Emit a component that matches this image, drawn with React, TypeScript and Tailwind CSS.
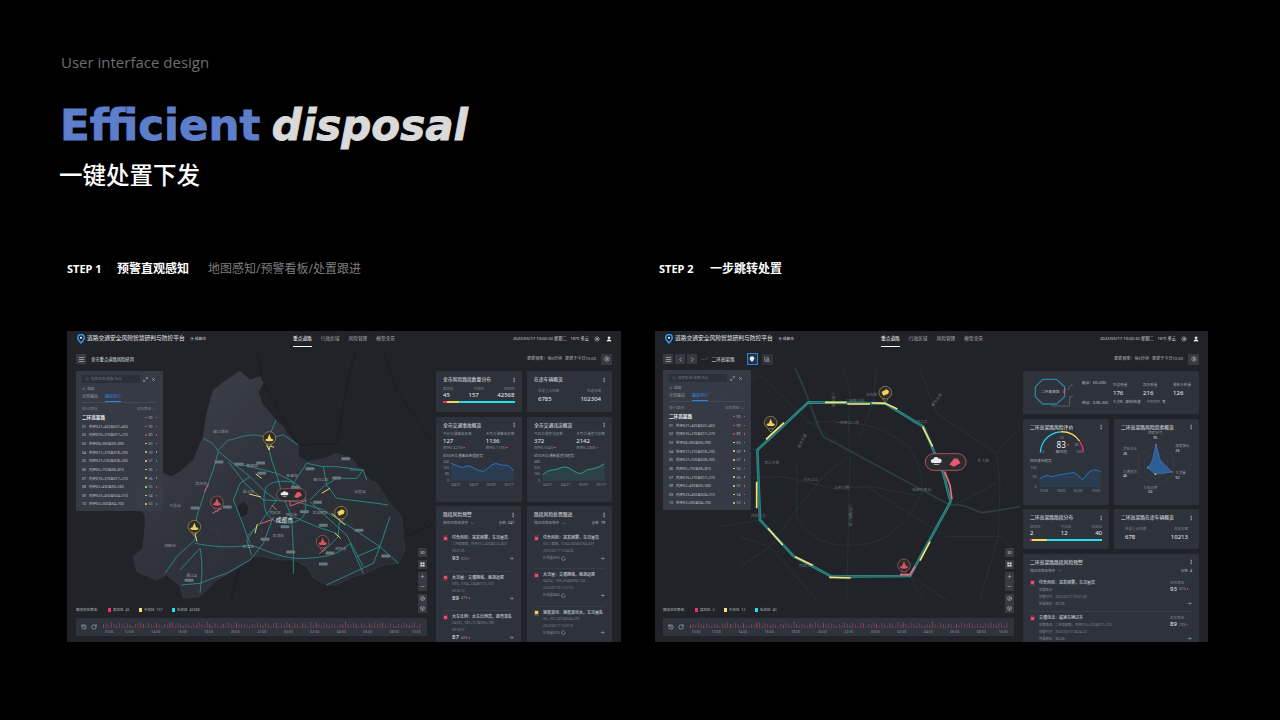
import { ArrowRight, ChevronDown, ChevronLeft, ChevronRight, ChartColumn, Compass, EllipsisVertical, Box, History, LayoutGrid, LoaderCircle, Maximize2, Menu, Minus, Plus, RotateCw, Search, Settings, Sun, User, X, MapPin, ArrowLeft } from 'lucide-react'
import type { ReactNode } from 'react'

const rows = [
  ['01', '外环K21+420至K22+450', '93', 'r'],
  ['02', '内环K16+270至K17+270', '89', 'r'],
  ['03', '外环K8+960至K9+990', '63', 'y'],
  ['04', '外环K17+270至K18+290', '59', 'y'],
  ['05', '内环K27+530至K28+300', '57', 'y'],
  ['06', '内环K5+750至K6+810', '56', 'y'],
  ['07', '内环K16+270至K17+270', '56', 'y'],
  ['08', '内环K2+430至K3+560', '55', 'y'],
  ['09', '内环K23+450至K24+510', '54', 'y'],
  ['10', '外环K3+560至K4+700', '53', 'y'],
]
const trend = ['#e0426a', '#e0426a', '#8a8f98', '#8a8f98', '#22a67a', '#22a67a', '#8a8f98', '#e0426a', '#22a67a', '#22a67a']
const times = ['10:00', '12:00', '14:00', '16:00', '18:00', '20:00', '22:00', '00:00', '02:00', '04:00', '06:00', '08:00', '10:00']

// smooth line through the points, coordinates are the zoomed ones of the picture
const smooth = (p: number[][]) => {
  let d = `M${p[0][0]},${p[0][1]}`
  for (let i = 1; i < p.length - 1; i++) {
    d += ` Q${p[i][0]},${p[i][1]} ${(p[i][0] + p[i + 1][0]) / 2},${(p[i][1] + p[i + 1][1]) / 2}`
  }
  const l = p[p.length - 1]
  return d + ` L${l[0]},${l[1]}`
}

const Logo = () => (
  <svg width="8" height="10" viewBox="0 0 16 20" fill="none">
    <path d="M8 18 C3 13 1.5 10.5 1.5 7.5 A6.5 6.5 0 1 1 14.5 7.5 C14.5 10.5 13 13 8 18Z" stroke="#2f9bf0" strokeWidth="3" />
    <circle cx="8" cy="7.5" r="2.2" fill="#fff" />
  </svg>
)

const Header = () => (
  <div className="flex h-[20px] items-start pl-[10px] pr-[9px]">
    <div className="flex h-[16px] w-[216px] items-center">
      <Logo />
      <span className="ml-[2px] text-[5.75px] leading-none text-[#e8eaee]">道路交通安全风险智慧研判与防控平台</span>
      <MapPin size={4} className="ml-[5px] text-[#c8ccd2]" />
      <span className="ml-[1px] text-[3.8px] leading-none text-[#c8ccd2]">成都市</span>
    </div>
    <div className="flex gap-[9px] text-[4.7px] text-[#a9adb5]">
      <span className="flex h-[16px] items-center border-b border-white text-white">重点道路</span>
      <span className="flex h-[16px] items-center">行政区域</span>
      <span className="flex h-[16px] items-center">风险管理</span>
      <span className="flex h-[16px] items-center">模型全景</span>
    </div>
    <div className="ml-auto flex h-[16px] items-center text-[4.2px] text-[#d4d7dc]">
      <span>2022/05/17 10:02:32 星期二</span>
      <span className="ml-[4px]">16℃ 多云</span>
      <Sun size={6} className="ml-[5px] text-white" />
      <User size={6} fill="#fff" className="ml-[6px] text-white" />
    </div>
  </div>
)

const Btn = ({ children, active }: { children: ReactNode; active?: boolean }) => (
  <span className={active ? 'flex h-[12px] w-[11px] items-center justify-center border border-[#2f7fd0] bg-[#24344a] text-white' : 'flex h-[10px] w-[10px] items-center justify-center bg-[#363a43] text-[#d4d7dc]'}>
    {children}
  </span>
)

const UpdateInfo = () => (
  <div className="ml-auto flex items-center text-[4.1px] text-[#b4b8bf]">
    <span>更新频率：每5分钟</span>
    <span className="ml-[3px]">更新于今日10:00</span>
    <span className="ml-[5px] flex h-[11px] w-[11px] items-center justify-center bg-[#363a43]">
      <Settings size={6} className="text-[#c8ccd2]" />
    </span>
  </div>
)

const SidePanel = ({ w }: { w: string }) => (
  <div className={`${w} h-[140px] shrink-0 rounded-[1px] bg-[#383c46]/95 px-[6px] pt-[4px]`}>
    <div className="flex items-center">
      <div className="flex h-[8px] w-[58px] items-center bg-[#2b2f37] pl-[3px] text-[3.5px] text-[#6f747d]">
        <Search size={4} />
        <span className="ml-[2px]">搜索区域/道路/地点</span>
      </div>
      <Maximize2 size={5} className="ml-[3px] text-[#c8ccd2]" />
      <X size={5} className="ml-[3px] text-[#dfe1e5]" />
    </div>
    <div className="mt-[3px] flex items-center text-[3.5px] leading-[5px] text-[#a2a6ae]">
      <ArrowLeft size={4} />
      <span className="ml-[1px]">返回</span>
    </div>
    <div className="mt-[3px] flex gap-[7px] border-b border-[#444852] text-[4px] text-[#8d929b]">
      <span className="pb-[1px]">全部路段</span>
      <span className="border-b border-[#2f86e0] pb-[1px] text-[#2f86e0]">路段排行</span>
    </div>
    <div className="mt-[3px] flex items-center justify-between text-[3.5px] leading-[6px] text-[#7e838c]">
      <span>排行/路段</span>
      <span className="flex items-center">风险等级<ChevronDown size={5} className="ml-[1px]" /></span>
    </div>
    <div className="mt-[1px] flex h-[9px] items-center">
      <span className="text-[4.6px] font-bold text-[#e8eaee]">二环高架路</span>
      <span className="ml-auto h-[1.5px] w-[1.5px] rounded-full bg-[#e0426a]" />
      <span className="ml-[2px] w-[6px] text-[3.5px] text-[#b4b8bf]">93</span>
      <span className="ml-[1px] h-[1.5px] w-[1.5px] bg-[#e0426a]" />
    </div>
    {rows.map((r, i) => (
      <div key={r[0]} className="flex h-[8.65px] items-center text-[3.5px] text-[#c2c5cb]">
        <span className="w-[7px]">{r[0]}</span>
        <span>{r[1]}</span>
        <span className={r[3] === 'r' ? 'ml-auto h-[1.5px] w-[1.5px] rounded-full bg-[#e0426a]' : 'ml-auto h-[1.5px] w-[1.5px] rounded-full bg-[#f3d765]'} />
        <span className="ml-[2px] w-[6px] text-[#b4b8bf]">{r[2]}</span>
        <span className="ml-[1px] h-[1.5px] w-[1.5px]" style={{ background: trend[i] }} />
      </div>
    ))}
  </div>
)

const MapTools = () => (
  <div className="flex w-[9px] flex-col gap-[3px] text-[#d4d7dc]">
    <span className="flex h-[9px] items-center justify-center bg-[#363a43] text-[3.6px]">3D</span>
    <span className="flex h-[9px] items-center justify-center bg-[#363a43]"><LayoutGrid size={5} fill="#d4d7dc" /></span>
    <div className="flex flex-col bg-[#363a43]">
      <span className="flex h-[9.5px] items-center justify-center"><Plus size={5} /></span>
      <span className="flex h-[9.5px] items-center justify-center"><Minus size={5} /></span>
    </div>
    <div className="flex flex-col bg-[#363a43]">
      <span className="flex h-[9.5px] items-center justify-center"><Compass size={5} /></span>
      <span className="flex h-[9.5px] items-center justify-center"><Box size={5} /></span>
    </div>
  </div>
)

const Legend = ({ h, m, l }: { h: string; m: string; l: string }) => (
  <div className="flex items-center text-[3.5px] leading-[6px] text-[#b4b8bf]">
    <span className="mr-[7px]">路段风险等级：</span>
    <span className="h-[3.5px] w-[3.5px] bg-[#ef2f66]" />
    <span className="ml-[2px]">高风险</span>
    <span className="ml-[2px] mr-[9px]">{h}</span>
    <span className="h-[3.5px] w-[3.5px] bg-[#f8e071]" />
    <span className="ml-[2px]">中风险</span>
    <span className="ml-[2px] mr-[9px]">{m}</span>
    <span className="h-[3.5px] w-[3.5px] bg-[#22e0e8]" />
    <span className="ml-[2px]">低风险</span>
    <span className="ml-[2px]">{l}</span>
  </div>
)

const Timeline = () => (
  <div className="mt-[5px] flex h-[18px] items-center rounded-[1px] bg-[#2f333c] pl-[5px]">
    <History size={6} className="text-[#c8ccd2]" />
    <RotateCw size={6} className="ml-[4px] text-[#c8ccd2]" />
    <div className="ml-[6px] flex flex-col">
      <svg width="320" height="7" viewBox="0 0 320 7">
        {Array.from({ length: 120 }).map((_, i) => {
          const h = 2 + ((i * 7) % 11) * 0.35 + (i % 13 === 0 ? 1.5 : 0)
          return <rect key={i} x={i * 2.66} y={7 - h} width="0.8" height={h} fill={i % 5 === 0 ? '#b04a64' : '#854357'} />
        })}
      </svg>
      <div className="-ml-[1px] mt-[1px] flex text-center text-[3.5px] leading-[5px] text-[#8d929b]">
        {times.map((t, i) => (
          <span key={i} className={i === 0 ? 'w-[14px]' : i === 12 ? 'w-[17.5px]' : 'w-[26.5px]'}>{t}</span>
        ))}
      </div>
    </div>
  </div>
)

const Card = ({ title, className, children }: { title: string; className: string; children?: ReactNode }) => (
  <div className={`${className} shrink-0 overflow-hidden rounded-[1px] bg-[#2e323b] px-[7px] pt-[5px]`}>
    <div className="flex items-center justify-between">
      <span className="text-[4.8px] leading-[7px] text-[#e3e5e9]">{title}</span>
      <EllipsisVertical size={6} className="-mr-[2px] text-[#c8ccd2]" />
    </div>
    {children}
  </div>
)

const RiskBar = ({ h, m, l, bar }: { h: string; m: string; l: string; bar: string[] }) => (
  <>
    <div className="mt-[3px] flex justify-between text-[3.5px] leading-[5px] text-[#7e838c]">
      <span>高风险</span><span>中风险</span><span>低风险</span>
    </div>
    <div className="flex justify-between text-[6px] leading-[9px] text-[#eceef1]">
      <span>{h}</span><span>{m}</span><span>{l}</span>
    </div>
    <div className="mt-[1px] flex h-[2px]">
      <span className={`${bar[0]} bg-[#ef2f66]`} />
      <span className={`${bar[1]} bg-[#f8d95f]`} />
      <span className="flex-1 bg-[#22dfe6]" />
    </div>
  </>
)

const Vehicles = ({ a, b }: { a: string; b: string }) => (
  <div className="mt-[5px] flex justify-between px-[4px]">
    <div>
      <div className="text-[3.5px] leading-[6px] text-[#7e838c]">在途重点车辆</div>
      <div className="text-[6px] leading-[10px] text-[#eceef1]">{a}</div>
    </div>
    <div className="text-right">
      <div className="text-[3.5px] leading-[6px] text-[#7e838c]">在途车辆</div>
      <div className="text-[6px] leading-[10px] text-[#eceef1]">{b}</div>
    </div>
  </div>
)

const Stat = ({ label, value, sub, pct }: { label: string; value: string; sub: string; pct: string }) => (
  <div>
    <div className="text-[3.6px] leading-[6px] text-[#8d929b]">{label}</div>
    <div className="text-[6px] leading-[9px] text-[#eceef1]">{value}</div>
    <div className="flex items-center text-[3.2px] leading-[4px] text-[#8d929b]">
      {sub} {pct}
      <span className="ml-[1px] h-[1.5px] w-[1.5px] bg-[#ef2f66]" />
    </div>
  </div>
)

type ChartProps = {
  box: string
  w: number
  h: number
  pts: number[][]
  color: string
  base: number
  yl: [string, number][]
  xl: [string, number][]
  yAt: number
  xAt: number
  x1: number
}
const Chart = ({ box, w, h, pts, color, base, yl, xl, yAt, xAt, x1 }: ChartProps) => {
  const line = smooth(pts)
  return (
    <svg width={w} height={h} viewBox={box} className="block">
      {yl.map(([t, y]) => (
        <g key={t}>
          <line x1={yAt + 4} x2={x1} y1={y} y2={y} stroke="#3d414b" strokeWidth="1" />
          <text x={yAt} y={y + 4} textAnchor="end" fontSize="11" fill="#8d929b">{t}</text>
        </g>
      ))}
      {xl.map(([t, x], i) => (
        <text key={i} x={x} y={xAt} textAnchor="middle" fontSize="10.5" fill="#8d929b">{t}</text>
      ))}
      <path d={`${line} L${pts[pts.length - 1][0]},${base} L${pts[0][0]},${base}Z`} fill={color} fillOpacity="0.16" />
      <path d={line} fill="none" stroke={color} strokeWidth="3" />
    </svg>
  )
}

const Delta = ({ v }: { v: string }) => (
  <span className="flex items-center text-[3.6px] text-[#8d929b]">
    {v}
    <span className="ml-[1px] h-[1.5px] w-[1.5px] bg-[#ef2f66]" />
  </span>
)

const WarnIcon = ({ y }: { y?: boolean }) => (
  <span className={y ? 'flex h-[6px] w-[5px] items-center justify-center rounded-[1px] bg-[#5a5040]' : 'flex h-[6px] w-[5px] items-center justify-center rounded-[1px] bg-[#5a3444]'}>
    <span className={y ? 'h-[3px] w-[2.5px] bg-[#f3cf6a]' : 'h-[3px] w-[2.5px] bg-[#ef4a70]'} />
  </span>
)

const SortRow = ({ total }: { total: string }) => (
  <div className="mt-[2px] flex items-center justify-between text-[3.6px] leading-[6px] text-[#9a9ea6]">
    <span className="flex items-center">按风险等级排序<ChevronDown size={5} className="ml-[2px]" /></span>
    <span>总数<span className="ml-[2px] text-[#d4d7dc]">{total}</span></span>
  </div>
)

const warnItems = [
  ['综合风险：突发团雾，车流量高', '二环高架路，外环K21+420至K22+450', '09:37:26', '93', '65%'],
  ['大流量：交通拥堵，瓶颈远尾', 'G93，K164+234至K172+307', '09:26:12', '89', '47%'],
  ['大车比例：大车比例高，跑弯混乱', 'G4202，K87+127至K90+789', '09:18:37', '87', '43%'],
]
const trackItems = [
  ['综合风险：突发团雾，车流量高', 'G32-1路路，K164+000至K164+307', '2022/05/17 12:34:26', '已处置65%', 'r'],
  ['大流量：交通拥堵，瓶颈远尾', 'G4202，K93+234至K96+124', '2022/05/16 11:57:12', '已处置84%', 'r'],
  ['速度波动：速度波动大，车流量乱', 'G5，K37+875至K64+256', '2022/05/17 12:37:16', '已处置62%', 'y'],
]

const WarnCard = () => (
  <Card title="路段风险预警" className="h-[140px] w-[85px]">
    <SortRow total="247" />
    <div className="mt-[6px]">
      {warnItems.map((it, i) => (
        <div key={i} className="h-[39.7px] border-b border-[#383c46] pt-[3px]">
          <div className="flex items-center text-[4px] leading-[6px] text-[#dfe1e5]">
            <WarnIcon />
            <span className="ml-[4px] whitespace-nowrap">{it[0]}</span>
          </div>
          <div className="ml-[9px] whitespace-nowrap text-[3.2px] leading-[7px] text-[#7e838c]">{it[1]}</div>
          <div className="ml-[9px] text-[3.2px] leading-[6px] text-[#7e838c]">{it[2]}</div>
          <div className="ml-[9px] flex items-center">
            <span className="text-[6px] leading-[9px] text-[#eceef1]">{it[3]}</span>
            <span className="ml-[2px]"><Delta v={it[4]} /></span>
            <ArrowRight size={5} className="ml-auto text-[#c8ccd2]" />
          </div>
        </div>
      ))}
    </div>
  </Card>
)

const TrackCard = () => (
  <Card title="路段风险处置跟进" className="h-[140px] w-[85px]">
    <SortRow total="79" />
    <div className="mt-[6px]">
      {trackItems.map((it, i) => (
        <div key={i} className="h-[37.3px] border-b border-[#383c46] pt-[3px]">
          <div className="flex items-center text-[4px] leading-[6px] text-[#dfe1e5]">
            <WarnIcon y={it[4] === 'y'} />
            <span className="ml-[4px] whitespace-nowrap">{it[0]}</span>
          </div>
          <div className="ml-[9px] whitespace-nowrap text-[3.2px] leading-[7px] text-[#7e838c]">{it[1]}</div>
          <div className="ml-[9px] text-[3.2px] leading-[6px] text-[#7e838c]">{it[2]}</div>
          <div className="ml-[9px] flex items-center text-[3.4px] leading-[8px] text-[#8d929b]">
            {it[3]}
            <LoaderCircle size={5} className="ml-[1px] text-[#d4d7dc]" />
            <ArrowRight size={5} className="ml-auto text-[#c8ccd2]" />
          </div>
        </div>
      ))}
    </div>
  </Card>
)

const LeftColumn = () => (
  <div className="flex h-[271px] w-[176px] flex-col gap-[4.5px] overflow-hidden">
    <div className="flex justify-between">
      <Card title="全市风险路段数量分布" className="h-[41px] w-[85.5px]">
        <RiskBar h="45" m="157" l="42568" bar={['w-[4px]', 'w-[12px]']} />
      </Card>
      <Card title="在途车辆概览" className="h-[41px] w-[85px]">
        <Vehicles a="6785" b="102304" />
      </Card>
    </div>
    <div className="flex justify-between">
      <Card title="全市交通事故概览" className="h-[85px] w-[85.5px]">
        <div className="mt-[2px] flex justify-between">
          <Stat label="今日交通事故总数" value="127" sub="同环比" pct="4.27%" />
          <Stat label="本月交通事故总数" value="1136" sub="同环比" pct="1.16%" />
        </div>
        <div className="mt-[3px] text-[3.6px] leading-[6px] text-[#a9adb5]">近30天交通事故数据趋势</div>
        <Chart
          box="42 430 220 88" w={73} h={29}
          pts={[[65, 443], [80, 448], [100, 458], [120, 447], [140, 462], [165, 470], [180, 455], [200, 441], [220, 450], [240, 448], [255, 465]]}
          color="#1f78c8" base={495} yAt={60} xAt={512} x1={258}
          yl={[['240', 438], ['160', 457], ['80', 476], ['0', 495]]}
          xl={[['04/27', 80], ['04/27', 135], ['05/07', 188], ['05/17', 242]]}
        />
      </Card>
      <Card title="全市交通违法概览" className="h-[85px] w-[85px]">
        <div className="mt-[2px] flex justify-between">
          <Stat label="今日交通违法总数" value="372" sub="同环比" pct="6.04%" />
          <Stat label="本月交通违法总数" value="2142" sub="同环比" pct="2.86%" />
        </div>
        <div className="mt-[3px] text-[3.6px] leading-[6px] text-[#a9adb5]">近30天交通数据违法趋势</div>
        <Chart
          box="312 430 220 88" w={73} h={29}
          pts={[[338, 477], [355, 463], [380, 463], [405, 450], [430, 465], [452, 478], [470, 462], [495, 460], [525, 445]]}
          color="#2a9d8f" base={495} yAt={330} xAt={512} x1={528}
          yl={[['480', 438], ['320', 457], ['160', 476], ['0', 495]]}
          xl={[['04/27', 352], ['04/27', 407], ['05/07', 462], ['05/17', 515]]}
        />
      </Card>
    </div>
    <div className="flex justify-between">
      <WarnCard />
      <TrackCard />
    </div>
  </div>
)

const Gauge = () => (
  <svg width="71" height="27" viewBox="70 325 190 72" className="mx-auto block">
    <path d="M95,382 A58,58 0 0 1 150,327" fill="none" stroke="#22dfe6" strokeWidth="3.5" />
    <path d="M150,327 A58,58 0 0 1 200,352" fill="none" stroke="#f8d95f" strokeWidth="3.5" />
    <path d="M200,352 A58,58 0 0 1 210,382" fill="none" stroke="#ef2f66" strokeWidth="3.5" />
    <text x="152" y="346" fontSize="9" textAnchor="middle" fill="#8d929b">50</text>
    <text x="103" y="385" fontSize="9" textAnchor="middle" fill="#8d929b">0</text>
    <text x="192" y="366" fontSize="9" textAnchor="middle" fill="#8d929b">80</text>
    <text x="198" y="384" fontSize="9" textAnchor="middle" fill="#8d929b">100</text>
    <text x="151" y="370" fontSize="22" textAnchor="middle" fill="#f2f3f5">83</text>
    <circle cx="169" cy="362" r="2.5" fill="#ef2f66" />
    <text x="151" y="384" fontSize="10.5" textAnchor="middle" fill="#a9adb5">高风险</text>
  </svg>
)

const hex = (r: number) => [[0, -1], [0.866, -0.5], [0.866, 0.5], [0, 1], [-0.866, 0.5], [-0.866, -0.5]].map(([x, y]) => `${422 + x * r},${430 + y * r}`).join(' ')

const radarLabels: [string, string, number, number, string][] = [
  ['团雾天气', '95', 420, 337, 'middle'],
  ['速度波动', '26', 480, 375, 'start'],
  ['大流量', '92', 480, 457, 'start'],
  ['大车比例', '50', 405, 500, 'middle'],
  ['交通违法', '46', 323, 452, 'start'],
  ['货车占比', '26', 323, 385, 'start'],
]

const Radar = () => (
  <svg width="85" height="66" viewBox="296 327 255 198" className="-mx-[7px] block">
    {[20, 40, 60].map((r) => <polygon key={r} points={hex(r)} fill="none" stroke="#4a4e58" strokeWidth="1" />)}
    <polygon points="422,368 435,415 470,450 420,457 397,437 410,420" fill="#2d74c2" fillOpacity="0.65" stroke="#3d8fe0" strokeWidth="1.5" />
    <circle cx="422" cy="368" r="2.5" fill="#ef4a70" />
    <circle cx="470" cy="450" r="2.5" fill="#ef4a70" />
    <circle cx="420" cy="457" r="2.5" fill="#f8d95f" />
    <circle cx="397" cy="437" r="2.5" fill="#4aa3f0" />
    {radarLabels.map(([t, v, x, y, a]) => (
      <g key={t}>
        <text x={x} y={y} fontSize="10.5" fill="#8d929b" textAnchor={a as 'start'}>{t}</text>
        <text x={x} y={y + 14} fontSize="11" fill="#dfe1e5" textAnchor={a as 'start'}>{v}</text>
      </g>
    ))}
  </svg>
)

const RoadCard = () => (
  <div className="flex h-[43px] shrink-0 items-center rounded-[1px] bg-[#2e323b]">
    <svg width="60" height="43" viewBox="25 138 180 129" className="shrink-0">
      <polygon points="84,163 125,163 150,185 150,215 125,237 84,237 62,215 62,185" fill="none" stroke="#2f7f9e" strokeWidth="4" />
      <path d="M150,190 L148,205" stroke="#ef4a70" strokeWidth="4" />
      <path d="M112,238 L112,243 L165,243 L165,215 L175,215 M160,195 L166,181 L175,181" fill="none" stroke="#7d828b" strokeWidth="1.5" />
      <text x="107" y="205" fontSize="11" textAnchor="middle" fill="#b4b8bf">二环高架路</text>
    </svg>
    <div className="-ml-[1px] flex h-[25px] w-[28px] flex-col justify-between text-[3.7px] leading-[5px] text-[#c2c5cb]">
      <span>起点：K0+000</span>
      <span>终点：K28+300</span>
    </div>
    <div className="ml-[3px] flex w-[78px] flex-col">
      <div className="flex justify-between">
        <div><div className="text-[3.6px] leading-[6px] text-[#8d929b]">匝道数量</div><div className="text-[6px] leading-[10px] text-[#eceef1]">176</div></div>
        <div><div className="text-[3.6px] leading-[6px] text-[#8d929b]">路段数量</div><div className="text-[6px] leading-[10px] text-[#eceef1]">216</div></div>
        <div><div className="text-[3.6px] leading-[6px] text-[#8d929b]">摄像头数量</div><div className="text-[6px] leading-[10px] text-[#eceef1]">126</div></div>
      </div>
      <div className="mt-[1px] flex text-[3.4px] leading-[5px] text-[#8d929b]">
        <span>车道数</span><span className="ml-[2px] text-[#c2c5cb]">双向3车道</span>
        <span className="ml-[6px]">中央护栏</span><span className="ml-[2px] text-[#c2c5cb]">有</span>
      </div>
    </div>
  </div>
)

const alertItems = [
  ['综合风险：突发团雾，车流量高', '预警路段', '', '2022/05/17 09:37:58', '成华区', '93', '65%'],
  ['交通违法：超速车辆过多', '预警路段', '二环高架路，内环K16+370至K17+270', '2022/05/17 08:24:23', '锦江区', '89', '23%'],
]

const RightColumn = () => (
  <div className="flex h-[271px] w-[176px] flex-col gap-[4.5px] overflow-hidden">
    <RoadCard />
    <div className="flex justify-between">
      <Card title="二环高架路风险评价" className="h-[86px] w-[86px]">
        <Gauge />
        <div className="text-[3.6px] leading-[6px] text-[#a9adb5]">风险变化趋势</div>
        <Chart
          box="42 430 225 88" w={73} h={29}
          pts={[[72, 475], [90, 462], [110, 470], [130, 462], [155, 460], [175, 454], [190, 462], [205, 482], [220, 455], [240, 445], [260, 453]]}
          color="#1f78c8" base={500} yAt={62} xAt={516} x1={262}
          yl={[['100', 440], ['50', 470], ['0', 500]]}
          xl={[['10:00', 85], ['18:00', 138], ['02:00', 190], ['10:00', 245]]}
        />
      </Card>
      <Card title="二环高架路风险因素概览" className="h-[86px] w-[85px]">
        <Radar />
      </Card>
    </div>
    <div className="flex justify-between">
      <Card title="二环高架路路段分布" className="h-[40px] w-[86px]">
        <RiskBar h="2" m="12" l="40" bar={['w-[1.5px]', 'w-[15px]']} />
      </Card>
      <Card title="二环高架路在途车辆概览" className="h-[40px] w-[85px]">
        <Vehicles a="678" b="10213" />
      </Card>
    </div>
    <Card title="二环高架路路段风险预警" className="h-[90px] w-[176px]">
      <SortRow total="4" />
      <div className="mt-[3px]">
        {alertItems.map((it, i) => (
          <div key={i} className="flex h-[35.5px] border-b border-[#383c46] pt-[3px]">
            <div className="flex-1">
              <div className="flex items-center text-[4px] leading-[6px] text-[#dfe1e5]">
                <WarnIcon />
                <span className="ml-[4px]">{it[0]}</span>
              </div>
              <div className="ml-[9px] flex text-[3.3px] leading-[7px] text-[#7e838c]"><span>{it[1]}</span><span className="ml-[3px]">{it[2]}</span></div>
              <div className="ml-[9px] flex text-[3.3px] leading-[7px] text-[#7e838c]"><span>预警时间</span><span className="ml-[3px]">{it[3]}</span></div>
              <div className="ml-[9px] flex text-[3.3px] leading-[7px] text-[#7e838c]"><span>所属辖区</span><span className="ml-[3px]">{it[4]}</span></div>
            </div>
            <div className="flex w-[22px] flex-col items-start">
              <span className="text-[3.5px] leading-[5px] text-[#7e838c]">风险等级</span>
              <span className="flex items-center"><span className="mr-[2px] text-[6px] leading-[9px] text-[#eceef1]">{it[5]}</span><Delta v={it[6]} /></span>
              <ArrowRight size={5} className="ml-auto mt-[7px] text-[#c8ccd2]" />
            </div>
          </div>
        ))}
      </div>
    </Card>
  </div>
)

// map marker, drawn in the zoomed coordinates of the map
const Pin = ({ x, y, kind }: { x: number; y: number; kind: 'cone' | 'redcone' | 'box' }) => {
  const ring = kind === 'redcone' ? '#a8646e' : '#a8995a'
  const fg = kind === 'redcone' ? '#dc5666' : '#f2d35e'
  return (
    <g>
      <path d={`M${x - 9},${y + 17} L${x},${y + 29} L${x + 9},${y + 17}`} fill="none" stroke={ring} strokeWidth="2" />
      <circle cx={x} cy={y} r="19" fill="#2e2d2b" stroke={ring} strokeWidth="2" />
      {kind === 'box' ? (
        <path d={`M${x - 11},${y - 2} L${x + 3},${y - 10} L${x + 11},${y - 5} L${x + 9},${y + 3} L${x - 6},${y + 9}Z`} fill={fg} />
      ) : (
        <>
          <path d={`M${x},${y - 12} L${x + 6},${y + 3} L${x - 6},${y + 3}Z`} fill={fg} />
          <ellipse cx={x} cy={y + 6} rx="12" ry="4" fill={fg} />
        </>
      )}
    </g>
  )
}

const Bubble = ({ x, y, s }: { x: number; y: number; s: number }) => (
  <g transform={`translate(${x} ${y}) scale(${s})`}>
    <rect x="0" y="0" width="88" height="36" rx="18" fill="#2c2c2e" stroke="#d8606f" strokeWidth="1.6" />
    <path d="M15,20 a4,4 0 0 1 2,-8 a6.5,6.5 0 0 1 12,-1 a4.5,4.5 0 0 1 3,9Z" fill="#e8eaee" />
    <rect x="18" y="22" width="12" height="2.5" fill="#9aa0a8" />
    <path d="M52,24 L62,10 L70,11 L76,20 L62,28Z" fill="#e5596b" />
  </g>
)

const regionPts = '270,3 300,30 330,20 340,40 325,65 335,100 365,135 378,150 400,170 410,190 445,225 445,260 475,275 525,265 560,250 605,265 630,300 660,330 680,340 720,400 755,440 760,500 765,540 745,580 700,585 650,610 610,620 560,645 530,645 490,625 470,590 430,570 380,570 340,560 310,560 270,590 230,615 200,630 170,660 150,680 100,685 88,645 50,615 20,630 -40,605 -50,560 -21,534 -15,470 -15,435 -40,400 -40,340 40,310 65,320 90,305 130,270 160,200 170,130 190,60 230,30'

const chengduRoads = [
  'M160,205 C175,215 190,215 205,245 L250,280 L300,320 L345,365 L380,390',
  'M378,150 L355,205 C300,180 260,210 235,210 L205,240',
  'M355,230 L365,270 L385,330 L395,370 L425,440 L430,540 L430,612',
  'M355,205 L400,195 L445,225',
  'M205,245 L190,300 L165,365 L140,440 L135,510 L80,560 L45,610',
  'M135,520 C180,530 250,535 300,525 C350,540 400,570 470,565 C520,560 560,560 600,520 L640,610',
  'M150,535 C160,590 155,620 150,670',
  'M150,535 L90,600 M95,645 L150,640 L200,620 L230,610 L300,570 L340,520 L370,440',
  'M320,470 L290,510 L305,555',
  'M300,320 L270,340 L250,390 L270,440 L300,520',
  'M235,275 L285,340 L340,390 L440,395 L520,420 L600,470 L690,530 L745,580',
  'M470,280 L430,340 L415,390',
  'M470,280 L520,290 L560,290 L640,300 L620,325 L560,325 L520,350 L480,390',
  'M520,290 L530,345 L560,385 L680,400 L715,405',
  'M480,395 L540,450 L590,495 L640,590',
  'M570,430 L565,500 L520,545',
  'M345,365 C345,340 380,330 420,335 C470,345 475,410 460,440 C430,470 370,465 350,430 C340,410 340,385 345,365',
  'M380,390 L330,460 L290,500',
  'M430,440 L500,470 L560,490',
  'M690,530 L670,580 L530,645',
  'M720,440 L690,530 L620,560',
  'M260,280 L300,290 L380,310 L430,335',
  'M600,300 L640,300 L650,330',
]
const chips = [[207, 276], [267, 283], [332, 279], [335, 310], [135, 414], [232, 411], [437, 352], [480, 296], [560, 324], [587, 266], [503, 397], [463, 425], [520, 466], [627, 481], [707, 558], [540, 549], [520, 582], [422, 546], [345, 508], [405, 470], [117, 631]]
const cities: [string, number, number][] = [['都江堰市', 213, 190], ['崇州市', 153, 344], ['大邑县', 75, 410], ['邛崃市', 60, 530], ['蒲江县', 125, 622], ['新津区', 295, 534], ['双流区', 385, 501], ['温江区', 295, 369], ['郫都区', 307, 292], ['新都区', 427, 320], ['青白江区', 513, 333], ['金堂县', 630, 370], ['龙泉驿区', 510, 431], ['简阳市', 572, 539], ['锦江区', 425, 438], ['武侯区', 375, 433]]

const ChengduMap = () => (
  <svg className="absolute inset-0" width="554" height="311" viewBox="0 0 554 311">
    <defs>
      <linearGradient id="region" x1="0" y1="0" x2="1" y2="1">
        <stop offset="0" stopColor="#3f434d" />
        <stop offset="0.45" stopColor="#30333b" />
        <stop offset="1" stopColor="#282b31" />
      </linearGradient>
    </defs>
    <g transform="translate(83 39) scale(0.3333)">
      <path d="M320,-60 L340,40 L445,225 L560,220 L600,0 L620,-60 M700,-60 L740,60 L800,150 L870,240 M760,500 L840,470 L870,420 M745,580 L800,640 L830,690 M270,590 L240,700" fill="none" stroke="#1a1c21" strokeWidth="3" />
      <polygon points={regionPts} fill="url(#region)" stroke="#3a3e47" strokeWidth="1.5" />
      <path d="M230,270 L300,330 L290,420 L200,480 L220,560 M430,270 L480,340 L600,430 L620,540 M380,570 L420,480 L560,600 M100,450 L200,480 M60,460 L140,620" fill="none" stroke="#3a3e47" strokeWidth="1.2" />
      <path d="M262,410 L280,395 L295,410 L290,435 L270,440Z" fill="#1f2227" />
      {chengduRoads.map((d, i) => <path key={i} d={d} fill="none" stroke="#2a8a88" strokeWidth="2.8" />)}
      {chips.map(([x, y], i) => <rect key={i} x={x - 13} y={y - 4.5} width="26" height="9" rx="1" fill="#667880" />)}
      {cities.map(([t, x, y]) => <text key={t} x={x} y={y} fontSize="11.5" textAnchor="middle" fill="#8f949c">{t}</text>)}
      <text x="403" y="457" fontSize="17" textAnchor="middle" fill="#e8eaee">成都市</text>
      <path d="M350,225 L357,240 L360,228 L372,232 M135,490 L141,515 M297,372 L333,381 M317,312 L335,325 M322,462 L315,490 M515,370 L540,355 M545,430 L585,465 M555,490 L572,505" fill="none" stroke="#f2d966" strokeWidth="3" />
      <path d="M176,342 L163,365 M187,430 L215,415 M328,462 L370,448 M365,405 L380,420 M420,395 L420,408 L470,390 M508,552 L528,532" fill="none" stroke="#e85a70" strokeWidth="3" />
      <Pin x={358} y={204} kind="cone" />
      <Pin x={201} y={397} kind="redcone" />
      <Pin x={133} y={470} kind="cone" />
      <Pin x={573} y={428} kind="box" />
      <Pin x={518} y={515} kind="redcone" />
      <Bubble x={380} y={356} s={1} />
    </g>
  </svg>
)

const ringPts = '205,97 435,100 550,170 610,310 632,395 510,618 275,620 160,558 60,450 52,240 205,97'
const bgRoads = [
  'M45,0 L130,80 L200,150 L340,250 M-60,200 L50,240 M-60,90 L50,20',
  'M310,0 C330,40 335,90 325,150 L330,260 L325,480 L320,690',
  'M200,160 C300,150 420,150 510,235 C550,300 550,350 540,380 L400,350 L280,355 L125,320 L-60,325',
  'M170,280 L170,440 C200,500 260,530 340,525 C420,530 500,470 540,380',
  'M540,0 L590,130 L770,250 L840,170 M770,250 L780,340 L775,500 L720,690',
  'M640,405 L770,340 M380,350 L620,500 L780,500 L840,560',
  'M320,260 L250,320 L170,420 L90,530 L0,590 M510,618 L620,690 M410,0 L400,90 L360,200',
  'M0,500 L90,530 L230,690 M550,690 L510,618 M-60,470 L60,450',
]
const ringLabels: [string, number, number][] = [['一环路北二段', 323, 162], ['二环路北段', 345, 97], ['清江东路', 95, 282], ['大光立交', 212, 334], ['人民公园', 305, 356], ['武侯立交', 55, 441], ['成都东客站', 545, 362], ['两河立交', 540, 159], ['东大路', 730, 275], ['武成大道', 200, 590], ['双庆路', 395, 77]]

const RingMap = () => (
  <svg className="absolute inset-0" width="553" height="311" viewBox="0 0 553 311">
    <g transform="translate(85 39) scale(0.3333)">
      {bgRoads.map((d, i) => <path key={i} d={d} fill="none" stroke="#24363a" strokeWidth="2.4" />)}
      <path d="M165,-5 C200,60 230,170 250,200 L630,405 C680,400 700,425 730,428 L840,410" fill="none" stroke="#2b4146" strokeWidth="5" />
      {ringLabels.map(([t, x, y]) => <text key={t} x={x} y={y} fontSize="11.5" textAnchor="middle" fill="#6a7078">{t}</text>)}
      <text x="275" y="88" fontSize="11.5" textAnchor="middle" fill="#6a7078" transform="rotate(90 275 88)">人民北路</text>
      <text x="327" y="435" fontSize="11.5" textAnchor="middle" fill="#6a7078" transform="rotate(90 327 435)">人民南路三段</text>
      <text x="190" y="215" fontSize="11.5" textAnchor="middle" fill="#6a7078" transform="rotate(-65 190 215)">青羊大道</text>
      <text x="593" y="92" fontSize="11.5" textAnchor="middle" fill="#6a7078" transform="rotate(-55 593 92)">成华大道</text>
      <polygon points={ringPts} fill="none" stroke="#2a8f8b" strokeWidth="8" />
      <polygon points={ringPts} fill="none" stroke="#22383b" strokeWidth="1.4" />
      <path d="M255,97 L320,97 M322,102 L390,102 M395,99 L435,100 L472,117 M548,170 L578,230 M132,158 L78,208 M50,335 L50,415 M84,475 L128,525 M165,560 L218,586 M268,622 L332,624 M570,515 L540,572" fill="none" stroke="#f6e27a" strokeWidth="5" />
      <path d="M614,305 L630,345 L636,388 M480,614 L510,614 L525,590" fill="none" stroke="#ef6b80" strokeWidth="5" />
      <Pin x={92} y={158} kind="cone" />
      <Pin x={436} y={68} kind="box" />
      <Pin x={492} y={586} kind="redcone" />
      <Bubble x={556} y={251} s={1.39} />
    </g>
  </svg>
)

const Screen1 = () => (
  <div className="relative h-[311px] w-[554px] overflow-hidden bg-[#212329]">
    <ChengduMap />
    <div className="relative flex h-full flex-col">
      <Header />
      <div className="flex h-[16px] items-center pl-[9px] pr-[9px]">
        <Btn><Menu size={7} /></Btn>
        <span className="ml-[5px] text-[4.3px] text-[#dfe1e5]">全市重点道路风险研判</span>
        <UpdateInfo />
      </div>
      <div className="flex flex-1 pl-[9px] pr-[9px] pt-[4px]">
        <div className="flex h-[265px] w-[351px] flex-col">
          <SidePanel w="w-[87px]" />
          <div className="mt-auto flex items-end justify-between">
            <Legend h="45" m="157" l="42568" />
            <MapTools />
          </div>
          <Timeline />
        </div>
        <div className="ml-[9px]"><LeftColumn /></div>
      </div>
    </div>
  </div>
)

const Screen2 = () => (
  <div className="relative h-[311px] w-[553px] overflow-hidden bg-[#212329]">
    <RingMap />
    <div className="relative flex h-full flex-col">
      <Header />
      <div className="flex h-[16px] items-center pl-[8px] pr-[9px]">
        <Btn><Menu size={7} /></Btn>
        <span className="ml-[2px]"><Btn><ChevronLeft size={7} /></Btn></span>
        <span className="ml-[2px]"><Btn><ChevronRight size={7} /></Btn></span>
        <span className="ml-[4px] text-[4px] text-[#8d929b]">— /</span>
        <span className="ml-[4px] w-[35px] text-[4.6px] text-[#dfe1e5]">二环高架路</span>
        <Btn active><MapPin size={6} fill="#e8eaee" /></Btn>
        <span className="ml-[4px] flex h-[11px] w-[11px] items-center justify-center bg-[#2f333c] text-[#d4d7dc]"><ChartColumn size={6} /></span>
        <UpdateInfo />
      </div>
      <div className="flex flex-1 pl-[8px] pr-[9px] pt-[3px]">
        <div className="flex h-[266px] w-[351px] flex-col">
          <SidePanel w="w-[88px]" />
          <div className="mt-auto flex items-end justify-between">
            <Legend h="2" m="12" l="40" />
            <MapTools />
          </div>
          <Timeline />
        </div>
        <div className="ml-[9px] pt-[1px]"><RightColumn /></div>
      </div>
    </div>
  </div>
)

export default function App() {
  return (
    <div className="h-[720px] w-[1280px] overflow-hidden bg-black font-['Noto_Sans','Noto_Sans_CJK_SC',sans-serif]">
      <div className="pl-[61px] pt-[52px]">
        <div className="text-[15px] leading-[20px] text-[#6e6e6e] font-['Open_Sans','Noto_Sans',sans-serif]">User interface design</div>
        <div className="-ml-[1px] mt-[27px] h-[52px] whitespace-nowrap font-bold leading-[52px] font-['DejaVu_Sans',sans-serif]">
          <span className="text-[43.5px] text-[#5d7ecb] [-webkit-text-stroke:0.9px_#5d7ecb]">Efficient</span>
          <span className="-ml-[3px] text-[42px] italic text-[#dadada] [-webkit-text-stroke:0.9px_#dadada]"> disposal</span>
        </div>
        <div className="-ml-[2px] mt-[5px] text-[23.5px] font-medium leading-[36px] text-white font-['Noto_Sans_CJK_SC',sans-serif]">一键处置下发</div>
      </div>
      <div className="mt-[66px] flex h-[22px] items-center pl-[67px] text-white">
        <div className="flex w-[592px] items-center">
          <span className="w-[50px] text-[11px] font-bold">STEP 1</span>
          <span className="text-[12px] font-bold">预警直观感知</span>
          <span className="ml-[19px] text-[12px] text-[#7d7d7d]">地图感知/预警看板/处置跟进</span>
        </div>
        <span className="w-[51px] text-[11px] font-bold">STEP 2</span>
        <span className="text-[12px] font-bold">一步跳转处置</span>
      </div>
      <div className="mt-[51px] flex gap-[34px] pl-[67px]">
        <Screen1 />
        <Screen2 />
      </div>
    </div>
  )
}
